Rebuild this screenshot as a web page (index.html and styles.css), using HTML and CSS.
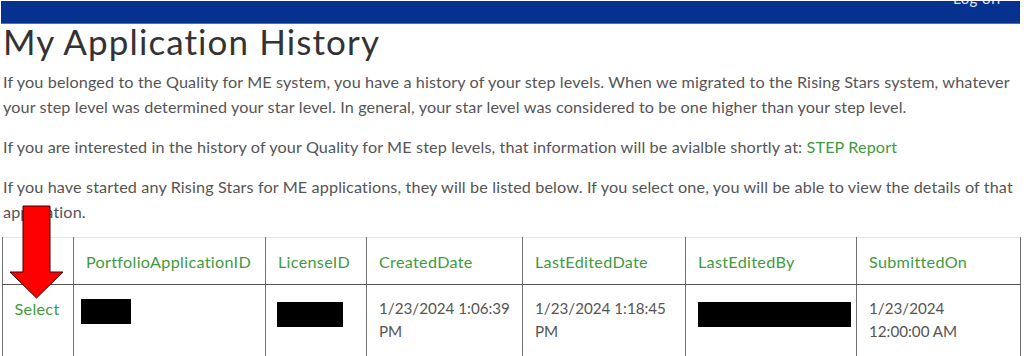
FILE: index.html
```html
<!DOCTYPE html>
<html>
<head>
<meta charset="utf-8">
<link rel="stylesheet" href="styles.css">
</head>
<body>
<div class="topbar"><span class="logoff">Log off</span></div>
<main class="content">
  <h1 class="title">My Application History</h1>
  <p class="para">If you belonged to the Quality for ME system, you have a history of your step levels. When we migrated to the Rising Stars system, whatever your step level was determined your star level. In general, your star level was considered to be one higher than your step level.</p>
  <p class="para">If you are interested in the history of your Quality for ME step levels, that information will be avialble shortly at: <a class="link" href="#">STEP Report</a></p>
  <p class="para">If you have started any Rising Stars for ME applications, they will be listed below. If you select one, you will be able to view the details of that application.</p>
  <table class="grid">
    <colgroup>
      <col class="c1"><col class="c2"><col class="c3"><col class="c4"><col class="c5"><col class="c6"><col class="c7">
    </colgroup>
    <thead>
      <tr>
        <th></th>
        <th>PortfolioApplicationID</th>
        <th>LicenseID</th>
        <th>CreatedDate</th>
        <th>LastEditedDate</th>
        <th>LastEditedBy</th>
        <th>SubmittedOn</th>
      </tr>
    </thead>
    <tbody>
      <tr>
        <td class="sel"><a class="link" href="#">Select</a></td>
        <td><span class="redact r1"></span></td>
        <td><span class="redact r2"></span></td>
        <td>1/23/2024 1:06:39 PM</td>
        <td>1/23/2024 1:18:45 PM</td>
        <td><span class="redact r3"></span></td>
        <td class="last">1/23/2024 12:00:00 AM</td>
      </tr>
    </tbody>
  </table>
</main>
<svg class="arrow" width="58" height="96" viewBox="0 0 58 96">
  <polygon points="15,1 42,1 42,67 55,67 28.5,93 2,67 15,67" fill="#ff0000" stroke="#3a0000" stroke-width="1"/>
</svg>
</body>
</html>
```
FILE: styles.css
```css
html, body {
  margin: 0;
  padding: 0;
  background: #ffffff;
}
body {
  position: relative;
  width: 1024px;
  height: 356px;
  overflow: hidden;
  font-family: "Lato", "Open Sans", sans-serif;
}
.topbar {
  height: 22px;
  margin: 1px 4px 0 1px;
  background: #07318f;
  border-bottom: 1px solid #4e6fb8;
  position: relative;
  overflow: hidden;
  display: flex;
  justify-content: flex-end;
}
.logoff {
  color: #dfe6f5;
  font-size: 15px;
  line-height: 15px;
  margin-top: -10px;
  margin-right: 18px;
  letter-spacing: 0.4px;
}
.content {
  padding: 0 0 0 3px;
}
.title {
  margin: -3px 0 0 0;
  font-weight: 400;
  font-size: 35px;
  line-height: 40px;
  color: #333333;
  letter-spacing: 1.1px;
}
.para {
  margin: 8px 0 15px 0;
  font-size: 16.2px;
  line-height: 25px;
  color: #555555;
  letter-spacing: 0.12px;
}
.link {
  color: #3f9b3c;
  text-decoration: none;
}
.grid {
  margin-top: -2px;
  margin-left: -1px;
  width: 1018px;
  table-layout: fixed;
  border-collapse: collapse;
  border-top: 1px solid #e6e6e6;
}
.c1 { width: 71px; }
.c2 { width: 192px; }
.c3 { width: 101px; }
.c4 { width: 156px; }
.c5 { width: 163px; }
.c6 { width: 171px; }
.c7 { width: 164px; }
.grid th {
  text-align: left;
  font-weight: 400;
  font-size: 16.2px;
  letter-spacing: 0.3px;
  color: #3f9b3c;
  height: 46px;
  padding: 0 4px 0 12px;
  border-left: 1px solid #707070;
  border-right: 1px solid #707070;
  border-bottom: 1px solid #555555;
  vertical-align: middle;
}
.grid td {
  vertical-align: top;
  padding: 12px 6px 12px 12px;
  font-size: 15.2px;
  line-height: 23px;
  color: #555555;
  border-left: 1px solid #707070;
  border-right: 1px solid #707070;
  height: 60px;
}
.grid td.last {
  padding-right: 22px;
}
.grid td.sel {
  text-align: center;
  padding-left: 2px;
  padding-right: 4px;
  font-size: 16.2px;
  letter-spacing: 0.3px;
  padding-top: 12px;
}
.redact {
  display: block;
  background: #000000;
  height: 25px;
}
.r1 { width: 50px; margin-left: -5px; margin-top: 2px; }
.r2 { width: 66px; margin-left: -1px; margin-top: 5px; }
.r3 { width: 153px; margin-left: 0; margin-top: 5px; }
.arrow {
  position: absolute;
  left: 8px;
  top: 205px;
}
```
